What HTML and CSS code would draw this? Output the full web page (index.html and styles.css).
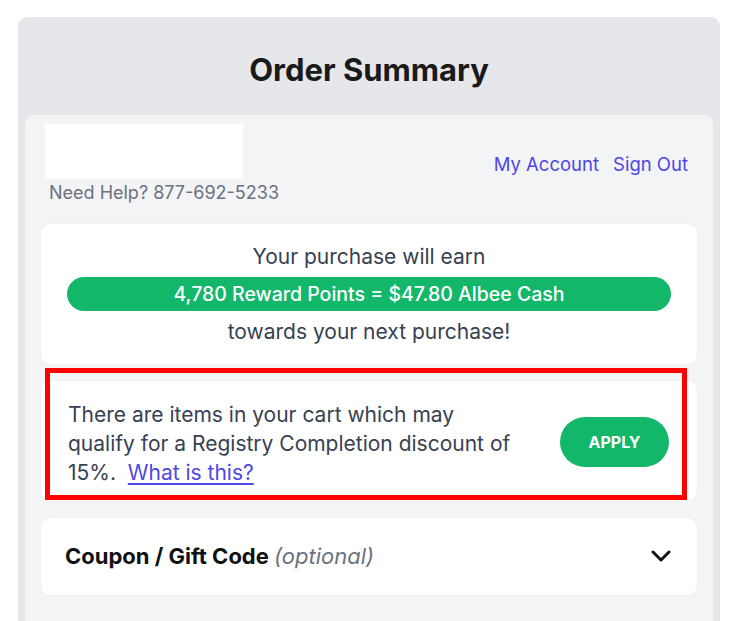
FILE: index.html
```html
<!DOCTYPE html>
<html lang="en">
<head>
<meta charset="utf-8">
<title>Order Summary</title>
<link rel="stylesheet" href="styles.css">
</head>
<body>
<div class="outer">
  <h1 class="title">Order Summary</h1>
  <div class="inner">
    <div class="header">
      <div class="brand">
        <div class="logo"></div>
        <div class="help">Need Help? 877-692-5233</div>
      </div>
      <nav class="links">
        <a href="#">My Account</a>
        <a href="#">Sign Out</a>
      </nav>
    </div>
    <div class="card reward">
      <div class="reward-line">Your purchase will earn</div>
      <div class="pill">4,780 Reward Points = $47.80 Albee Cash</div>
      <div class="reward-line">towards your next purchase!</div>
    </div>
    <div class="card registry">
      <p class="registry-text">There are items in your cart which may qualify for a Registry Completion discount of 15%.&nbsp; <a href="#" class="what">What is this?</a></p>
      <button class="apply">APPLY</button>
      <div class="highlight"></div>
    </div>
    <div class="card coupon">
      <span class="coupon-label">Coupon / Gift Code <em class="optional">(optional)</em></span>
      <svg class="chevron" width="20" height="12" viewBox="0 0 20 12"><path d="M2 2 L10 10 L18 2" fill="none" stroke="#111" stroke-width="3" stroke-linecap="round" stroke-linejoin="round"/></svg>
    </div>
  </div>
</div>
</body>
</html>
```
FILE: styles.css
```css
* { box-sizing: border-box; }
html, body { margin: 0; padding: 0; background: #ffffff; }
body {
  font-family: "Inter", "Noto Sans", sans-serif;
  color: #374151;
  height: 621px;
  overflow: hidden;
}
.outer {
  margin: 17px 0 0 18px;
  width: 702px;
  height: 700px;
  background: #e5e7eb;
  border-radius: 9px;
  padding: 0 7px 0 7px;
}
.title {
  margin: 0;
  height: 98px;
  display: flex;
  align-items: center;
  justify-content: center;
  font-size: 31px;
  font-weight: 700;
  color: #1a1a1a;
  padding-top: 6px;
}
.inner {
  background: #f3f4f6;
  border-radius: 9px;
  height: 600px;
  padding: 9px 16px 0 16px;
}
.header {
  display: flex;
  justify-content: space-between;
  align-items: center;
  padding: 0 9px 0 4px;
  margin-bottom: 19px;
}
.logo {
  width: 198px;
  height: 55px;
  background: #ffffff;
}
.help {
  font-size: 18px;
  color: #6b7280;
  margin-top: 2px;
  padding-left: 4px;
  line-height: 24px;
}
.links {
  display: flex;
  gap: 14px;
  margin-top: -2px;
}
.links a {
  color: #4f46e5;
  text-decoration: none;
  font-size: 18.5px;
}
.card {
  background: #ffffff;
  border-radius: 9px;
  box-shadow: 0 0 2px rgba(0,0,0,0.06);
}
.reward {
  height: 140px;
  padding: 18px 26px 0 26px;
  text-align: center;
  margin-bottom: 17px;
}
.reward-line {
  font-size: 21px;
  line-height: 30px;
  color: #374151;
}
.pill {
  background: #13b76a;
  color: #ffffff;
  border-radius: 17px;
  height: 34px;
  line-height: 34px;
  font-size: 19.5px;
  font-weight: 500;
  margin: 5px 0 6px;
}
.registry {
  position: relative;
  height: 119px;
  display: flex;
  align-items: center;
  justify-content: space-between;
  padding: 0 28px 0 27px;
  margin-bottom: 18px;
}
.registry-text {
  margin: 6px 0 0;
  width: 456px;
  font-size: 21px;
  line-height: 29px;
  color: #374151;
}
.what {
  color: #4f46e5;
  text-decoration: underline;
  text-underline-offset: 3px;
}
.apply {
  width: 109px;
  height: 50px;
  border: none;
  border-radius: 25px;
  background: #13b76a;
  color: #ffffff;
  font-family: inherit;
  font-weight: 700;
  font-size: 16px;
  margin-top: 2px;
}
.highlight {
  position: absolute;
  left: 4px;
  top: -13px;
  width: 642px;
  height: 132px;
  border: 5px solid #ff0000;
  pointer-events: none;
}
.coupon {
  height: 77px;
  display: flex;
  align-items: center;
  justify-content: space-between;
  padding: 0 26px 2px 24px;
}
.coupon-label {
  font-size: 22px;
  font-weight: 700;
  color: #111111;
}
.optional {
  font-weight: 400;
  color: #6b7280;
}
.chevron { display: block; }
```
